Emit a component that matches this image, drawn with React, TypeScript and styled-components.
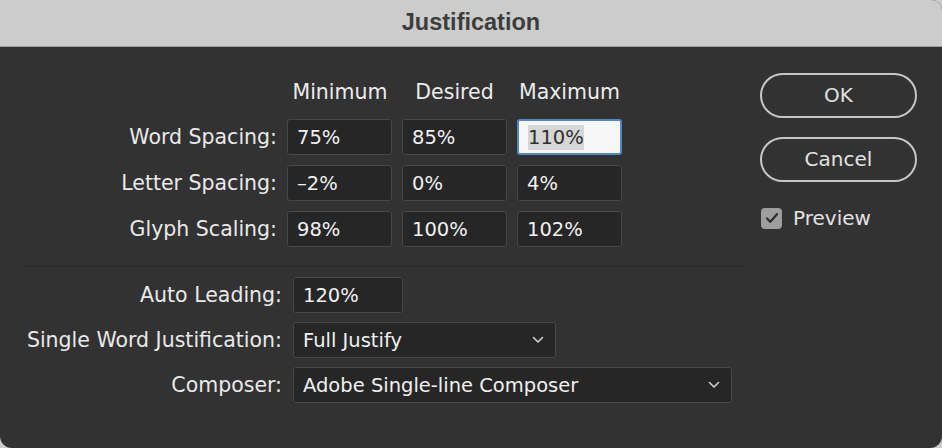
import React from 'react';
import styled, { createGlobalStyle } from 'styled-components';

const GlobalStyle = createGlobalStyle`
  html, body {
    margin: 0;
    padding: 0;
    background: #cbcccb;
  }
  * {
    box-sizing: border-box;
  }
`;

const Window = styled.div`
  width: 942px;
  height: 448px;
  display: flex;
  flex-direction: column;
  background: #323232;
  border-radius: 0 10px 12px 12px;
  overflow: hidden;
  font-family: 'DejaVu Sans', 'Noto Sans', sans-serif;
  font-weight: 500;
`;

const TitleBar = styled.div`
  height: 47px;
  flex: none;
  display: flex;
  align-items: center;
  justify-content: center;
  background: #cbcccb;
  border-bottom: 1px solid #9c9c9c;
  font-family: 'Liberation Sans', Arial, sans-serif;
  font-weight: 700;
  font-size: 23.5px;
  color: #3d3d3d;
  padding-bottom: 2px;
`;

const Body = styled.div`
  flex: 1;
  display: flex;
  gap: 18px;
  padding: 0 25px 0 25px;
`;

const Form = styled.div`
  width: 717px;
  display: flex;
  flex-direction: column;
  padding-top: 28px;
`;

const SpacingGrid = styled.div`
  display: grid;
  grid-template-columns: 252px 105px 105px 105px;
  grid-template-rows: 34px 36px 36px 36px;
  column-gap: 10px;
  row-gap: 10px;
  & > :nth-child(2) {
    margin-left: 1px;
  }
`;

const ColumnHead = styled.div`
  display: flex;
  align-items: center;
  justify-content: center;
  color: #ececec;
  font-size: 20.5px;
  white-space: nowrap;
`;

const Label = styled.div`
  display: flex;
  align-items: center;
  justify-content: flex-end;
  color: #e9e9e9;
  font-size: 20.5px;
  white-space: nowrap;
  padding-bottom: 1px;
`;

const Field = styled.div<{ $focused?: boolean; $width?: number }>`
  display: flex;
  align-items: center;
  height: 36px;
  width: ${(p) => (p.$width ? `${p.$width}px` : 'auto')};
  padding: 0 9px;
  border-radius: 3px;
  font-size: 19.5px;
  white-space: nowrap;
  background: ${(p) => (p.$focused ? '#f6f6f6' : '#262626')};
  border: ${(p) => (p.$focused ? '2px solid #4f87c9' : '1.5px solid #484848')};
  color: ${(p) => (p.$focused ? '#2f2f2f' : '#f0f0f0')};
`;

const Selected = styled.span`
  background: #d6d6d6;
  padding: 1px 0;
`;

const Separator = styled.div`
  height: 1px;
  background: #282828;
  margin: 19px 0 10px;
`;

const OptionsGrid = styled.div`
  display: grid;
  grid-template-columns: 257px auto;
  grid-auto-rows: 36px;
  column-gap: 11px;
  row-gap: 9px;
  justify-items: start;
  & > ${Label} {
    justify-self: stretch;
  }
`;

const Select = styled(Field)`
  justify-content: space-between;
  padding-right: 11px;
`;

const Side = styled.div`
  width: 157px;
  display: flex;
  flex-direction: column;
  padding-top: 26px;
`;

const PillButton = styled.button`
  height: 45px;
  width: 157px;
  border-radius: 999px;
  border: 2px solid #c6c6c6;
  background: transparent;
  color: #e2e2e2;
  font-family: 'DejaVu Sans', 'Noto Sans', sans-serif;
  font-weight: 500;
  font-size: 20px;
  padding: 0 0 2px;
  & + & {
    margin-top: 19px;
  }
`;

const CheckRow = styled.label`
  display: flex;
  align-items: center;
  gap: 11px;
  margin-top: 24px;
  padding-left: 1px;
  color: #e2e2e2;
  font-size: 20px;
`;

const CheckBox = styled.span`
  width: 21px;
  height: 21px;
  border-radius: 4px;
  background: #9e9e9e;
  display: flex;
  align-items: center;
  justify-content: center;
`;

const Chevron = () => (
  <svg width="12" height="8" viewBox="0 0 12 8">
    <path d="M1.5 1.5 L6 6 L10.5 1.5" fill="none" stroke="#cfcfcf" strokeWidth="1.6" strokeLinecap="round" strokeLinejoin="round" />
  </svg>
);

const rows = [
  { label: 'Word Spacing:', values: ['75%', '85%', '110%'] },
  { label: 'Letter Spacing:', values: ['\u20132%', '0%', '4%'] },
  { label: 'Glyph Scaling:', values: ['98%', '100%', '102%'] },
];

export default function App() {
  return (
    <>
      <GlobalStyle />
      <Window>
        <TitleBar>Justification</TitleBar>
        <Body>
          <Form>
            <SpacingGrid>
              <div />
              <ColumnHead>Minimum</ColumnHead>
              <ColumnHead>Desired</ColumnHead>
              <ColumnHead>Maximum</ColumnHead>
              {rows.map((r, ri) => (
                <React.Fragment key={r.label}>
                  <Label>{r.label}</Label>
                  {r.values.map((v, vi) => {
                    const focused = ri === 0 && vi === 2;
                    return (
                      <Field key={vi} $focused={focused}>
                        {focused ? <Selected>{v}</Selected> : v}
                      </Field>
                    );
                  })}
                </React.Fragment>
              ))}
            </SpacingGrid>
            <Separator />
            <OptionsGrid>
              <Label>Auto Leading:</Label>
              <Field $width={110}>120%</Field>
              <Label>Single Word Justification:</Label>
              <Select $width={263}>
                Full Justify
                <Chevron />
              </Select>
              <Label>Composer:</Label>
              <Select $width={439}>
                Adobe Single-line Composer
                <Chevron />
              </Select>
            </OptionsGrid>
          </Form>
          <Side>
            <PillButton>OK</PillButton>
            <PillButton>Cancel</PillButton>
            <CheckRow>
              <CheckBox>
                <svg width="14" height="12" viewBox="0 0 14 12">
                  <path d="M2 6.5 L5.3 9.8 L12 2.2" fill="none" stroke="#2c2c2c" strokeWidth="2.2" strokeLinecap="round" strokeLinejoin="round" />
                </svg>
              </CheckBox>
              Preview
            </CheckRow>
          </Side>
        </Body>
      </Window>
    </>
  );
}
